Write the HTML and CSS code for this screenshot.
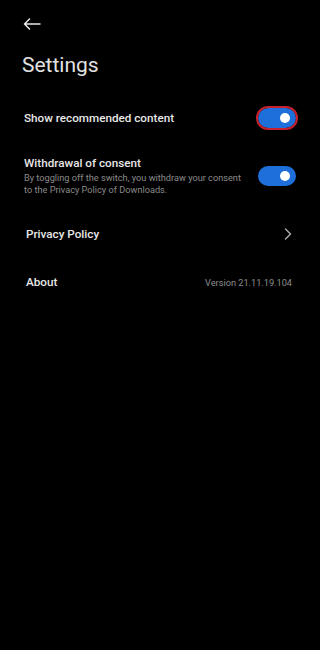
FILE: index.html
```html
<!DOCTYPE html>
<html lang="en">
<head>
  <meta charset="UTF-8">
  <meta name="viewport" content="width=device-width, initial-scale=1.0">
  <title>Settings</title>
  <link rel="stylesheet" href="styles.css">
</head>
<body>
  <div class="topbar">
    <svg class="back" width="18" height="12" viewBox="0 0 18 12">
      <path d="M17 6H1.5M6.5 1L1.5 6l5 5" fill="none" stroke="#e8e8e8" stroke-width="1.5" stroke-linecap="round" stroke-linejoin="round"/>
    </svg>
  </div>
  <h1>Settings</h1>

  <div class="list">
    <div class="row row-switch">
      <div class="label">Show recommended content</div>
      <div class="toggle focused"><span class="knob"></span></div>
    </div>

    <div class="row row-desc">
      <div class="text">
        <div class="label">Withdrawal of consent</div>
        <div class="desc">By toggling off the switch, you withdraw your consent to the Privacy Policy of Downloads.</div>
      </div>
      <div class="toggle"><span class="knob"></span></div>
    </div>

    <div class="row row-link">
      <div class="label">Privacy Policy</div>
      <svg class="chevron" width="8" height="12" viewBox="0 0 8 12">
        <path d="M1.5 1l5 5-5 5" fill="none" stroke="#a8a8a8" stroke-width="1.5" stroke-linecap="round" stroke-linejoin="round"/>
      </svg>
    </div>

    <div class="row row-link">
      <div class="label">About</div>
      <div class="value">Version 21.11.19.104</div>
    </div>
  </div>
</body>
</html>
```

FILE: styles.css
```css
* {
  box-sizing: border-box;
}

body {
  margin: 0;
  background: #000;
  color: #e6e6e6;
  font-family: Roboto, "Noto Sans", sans-serif;
  min-height: 650px;
}

.topbar {
  height: 48px;
  padding-left: 23px;
  display: flex;
  align-items: center;
}

h1 {
  margin: 0;
  padding-left: 22px;
  font-size: 21px;
  line-height: 34px;
  font-weight: 400;
  color: #e2e2e2;
}

.list {
  margin-top: 14px;
}

.row {
  display: flex;
  align-items: center;
  justify-content: space-between;
  padding: 0 24px;
}

.row-switch {
  height: 44px;
}

.row-desc {
  padding-top: 15px;
  padding-bottom: 14px;
}

.row-link {
  height: 48px;
  padding-left: 26px;
  padding-right: 28px;
}

.label {
  font-size: 11.7px;
  line-height: 16px;
  font-weight: 500;
  color: #e8e8e8;
}

.text {
  width: 226px;
}

.desc {
  margin-top: 1px;
  font-size: 9.2px;
  line-height: 12px;
  color: #8a8a8a;
}

.value {
  font-size: 9.2px;
  color: #8c8c8c;
}

.toggle {
  position: relative;
  width: 38px;
  height: 20px;
  border-radius: 10px;
  background: #1e6fd9;
  flex-shrink: 0;
}

.toggle.focused {
  outline: 2px solid #c8202c;
}

.knob {
  position: absolute;
  top: 5px;
  right: 6px;
  width: 10px;
  height: 10px;
  border-radius: 50%;
  background: #fff;
}
```
